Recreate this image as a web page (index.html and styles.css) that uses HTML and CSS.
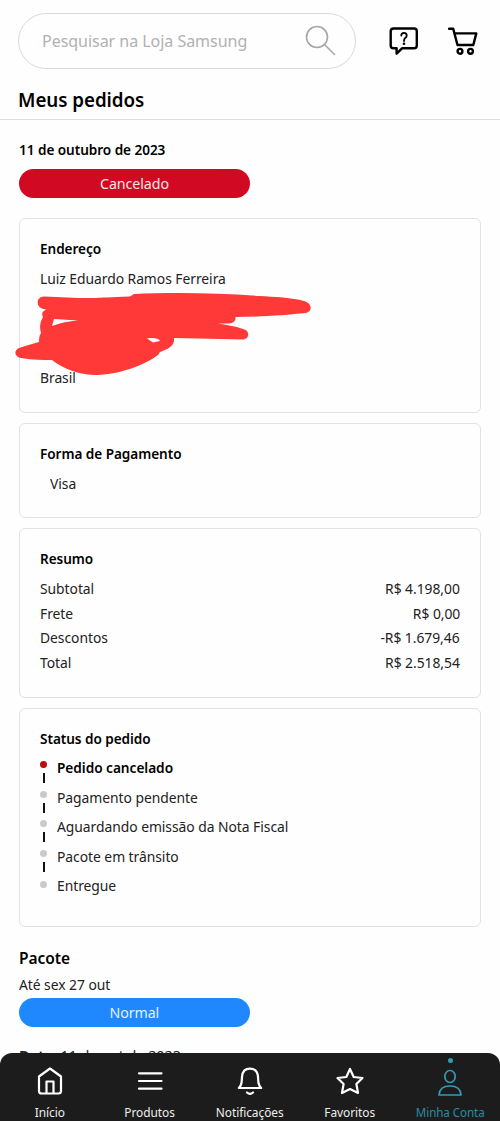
FILE: index.html
```html
<!DOCTYPE html>
<html lang="pt-BR">
<head>
<meta charset="utf-8">
<title>Meus pedidos</title>
<link rel="stylesheet" href="styles.css">
</head>
<body>
<div class="app">
  <header class="topbar">
    <div class="search">
      <span class="search-text">Pesquisar na Loja Samsung</span>
      <svg class="search-icon" viewBox="0 0 32 32"><circle cx="12" cy="12" r="10.5"/><path d="M19.5 19.5 L29.5 29.5"/></svg>
    </div>
    <svg class="top-icon chat" viewBox="0 0 30 30"><path d="M4.500 2.500 H25 Q27.800 2.500 27.800 5.300 V19.500 Q27.800 22.300 25 22.300 H13 L7.600 27.600 V22.300 H4.500 Q1.700 22.300 1.700 19.500 V5.300 Q1.700 2.500 4.500 2.500 Z"/><path class="thin" d="M12.300 9.500 Q12.300 6.800 15 6.800 Q17.700 6.800 17.700 9.400 Q17.700 11 16.200 12.100 Q15 13 15 15"/><circle class="dot" cx="15" cy="17.800" r="1.300"/></svg>
    <svg class="top-icon cart" viewBox="0 0 30 30"><path d="M1 2.800 H5.200 L9.500 19 H25.300 L28.300 7.400 H6.400"/><circle cx="12" cy="25.300" r="2.400"/><circle cx="22.500" cy="25.300" r="2.400"/></svg>
  </header>
  <h1 class="page-title"><span class="heading">Meus pedidos</span></h1>
  <main class="content">
    <h2 class="order-date"><span class="heading">11 de outubro de 2023</span></h2>
    <div class="badge red"><span class="text">Cancelado</span></div>

    <section class="card address">
      <h3 class="card-title"><span class="heading">Endereço</span></h3>
      <p class="line"><span class="text">Luiz Eduardo Ramos Ferreira</span></p>
      <p class="line hidden-lines"></p>
      <p class="line"><span class="text">Brasil</span></p>
      <svg class="scribble" viewBox="0 0 300 90">
        <path fill-rule="evenodd" d="M29 1.500 C21 1.500 21 12 27 13.500 L31 14.500 C26 17 27 20 28 22 C24 29 25 34 26 38 C24 41 24 44 24 47 C17 49 10 51 4 53 C-2 56 0 62 6 63 C18 65 28 65 37 65 C49 74 62 79 79 80 C104 80 130 70 143 60 C144 59 144 58 145 57 C153 54 160 51 159 43 L228 44.500 C235 44 235 35 228 34 C220 31 211 30 203 28.500 L214 28.500 C219 28 221 25 220.500 22 C244 22 271 20 291 18 C298 16 297 8 289 6 C277 2.500 260 2 244 1 C205 -2 159 -3 119 -1 L115 1.500 C95 2.500 85 2.500 81 3 C64 3.500 48 2 29 1.500 Z M39 24 L63 25.500 C54 26 45 28 37 31 Z M132 43.500 C139 42.500 144 43.500 145 46 L138 47.500 Z"/>
      </svg>
    </section>

    <section class="card payment">
      <h3 class="card-title"><span class="heading">Forma de Pagamento</span></h3>
      <p class="line visa"><span class="text">Visa</span></p>
    </section>

    <section class="card summary">
      <h3 class="card-title"><span class="heading">Resumo</span></h3>
      <div class="rows">
        <div class="row"><span class="text">Subtotal</span><span class="text amount">R$ 4.198,00</span></div>
        <div class="row"><span class="text">Frete</span><span class="text amount">R$ 0,00</span></div>
        <div class="row"><span class="text">Descontos</span><span class="text amount">-R$ 1.679,46</span></div>
        <div class="row"><span class="text">Total</span><span class="text amount">R$ 2.518,54</span></div>
      </div>
    </section>

    <section class="card status">
      <h3 class="card-title"><span class="heading">Status do pedido</span></h3>
      <ol class="steps">
        <li class="step current"><span class="track"></span><span class="text">Pedido cancelado</span></li>
        <li class="step"><span class="track"></span><span class="text">Pagamento pendente</span></li>
        <li class="step"><span class="track"></span><span class="text">Aguardando emissão da Nota Fiscal</span></li>
        <li class="step"><span class="track"></span><span class="text">Pacote em trânsito</span></li>
        <li class="step last"><span class="track"></span><span class="text">Entregue</span></li>
      </ol>
    </section>

    <h2 class="package-title"><span class="text">Pacote</span></h2>
    <p class="eta"><span class="text">Até sex 27 out</span></p>
    <div class="badge blue"><span class="text">Normal</span></div>
    <p class="package-date"><span class="text"><b>Data: </b>11 de out de 2023</span></p>
  </main>

  <nav class="bottom-nav">
    <a class="tab"><svg viewBox="0 0 30 30"><path d="M4 10.500 L15 2.500 L26 10.500 V25 Q26 27.500 23.500 27.500 H6.500 Q4 27.500 4 25 Z M11.500 27 V15.500 H18.500 V27"/></svg><span>Início</span></a>
    <a class="tab"><svg viewBox="0 0 30 30"><path d="M4 7.300 H26.500 M4 15 H26.500 M4 22.700 H26.500"/></svg><span>Produtos</span></a>
    <a class="tab"><svg viewBox="0 0 30 30"><path d="M3.800 22 C7.500 19 6.500 15 7 11 Q7.500 2.700 15 2.700 Q22.500 2.700 23 11 C23.500 15 22.500 19 26.200 22 Z M12 26.500 Q15 29.300 18 26.500"/></svg><span>Notificações</span></a>
    <a class="tab"><svg viewBox="0 0 30 30"><path d="M15 3 L18.700 11 L27.500 12 L21.400 18 L23 27 L15 23 L7 27 L8.600 18 L2.500 12 L11.300 11 Z"/></svg><span>Favoritos</span></a>
    <a class="tab active"><svg viewBox="0 0 30 30"><ellipse cx="15" cy="10.500" rx="5.200" ry="6"/><path d="M4 29 Q4.500 20 15 20 Q25.500 20 26 29 Z"/></svg><span>Minha Conta</span></a>
  </nav>
</div>
</body>
</html>
```
FILE: styles.css
```css
* { box-sizing: border-box; margin: 0; padding: 0; }
body { background: #fefefe; font-family: "Noto Sans", sans-serif; font-size: 15px; letter-spacing: -0.05px; color: #222; }
.app { height: 1121px; overflow: hidden; position: relative; }
svg { fill: none; stroke: currentColor; stroke-linecap: round; stroke-linejoin: round; display: block; }

/* Slightly condensed lettering */
.text, .heading, .search-text, .tab span { display: inline-block; transform-origin: left center; }
.text { transform: scaleX(0.925); }
.heading { transform: scaleX(0.905); }
.amount { transform-origin: right center; }
.badge .text { transform: scaleX(0.945); transform-origin: center; }

.topbar { display: flex; align-items: flex-start; padding: 13px 0 0 18px; height: 79px; }
.search { width: 337.5px; height: 56px; border: 1px solid #d9d9d9; border-radius: 28px; display: flex; align-items: center; justify-content: space-between; padding: 0 18px 1px 23px; }
.search-text { font-size: 17px; color: #b2b0b1; transform: scaleX(0.943); }
.search-icon { width: 32px; height: 32px; color: #a9a5a5; stroke-width: 1.6; }
.top-icon { width: 30px; height: 30px; margin-top: 13px; color: #000; stroke-width: 2.4; }
.chat { margin-left: 33.5px; }
.cart { margin-left: 28.5px; }
.thin { stroke-width: 1.8; }
.dot { fill: currentColor; stroke: none; }
.page-title { height: 41px; border-bottom: 1.5px solid #dcdcdc; padding-left: 18px; font-size: 20.5px; line-height: 40px; font-weight: 600; color: #000; }
.page-title .heading { transform: scaleX(0.915); }
.content { padding: 14px 19px 0; }
.order-date { font-size: 15px; line-height: 30px; font-weight: 600; color: #000; }
.badge { width: 231px; height: 29px; margin-top: 5px; border-radius: 15px; color: #fbe5e9; text-align: center; line-height: 29px; }
.red { background: #d10923; margin-bottom: 20px; }
.blue { background: #1f88ff; color: #e5f2ff; margin-top: 0; }
.card { position: relative; border: 1.500px solid #e2e2e2; border-radius: 6px; margin-bottom: 10px; padding: 14px 20px 0; width: 462px; }
.address { height: 194.5px; }
.payment { height: 95.5px; }
.summary { height: 170px; }
.status { height: 218.5px; }
.card-title { font-size: 15px; line-height: 30px; font-weight: 600; color: #000; }
.line { line-height: 30px; }
.hidden-lines { height: 69px; }
.visa { padding-left: 10px; }
.rows { padding-top: 3px; }
.row { display: flex; justify-content: space-between; line-height: 24.7px; }
.scribble { position: absolute; left: -5px; top: 76px; width: 300px; height: 90px; overflow: visible; fill: #ff3838; stroke: none; }
.steps { list-style: none; }
.step { display: flex; line-height: 29.6px; height: 29.6px; }
.current { font-weight: 600; color: #000; }
.current .text { transform: scaleX(0.912); }
.track { width: 17px; flex: none; display: flex; flex-direction: column; padding-top: 8px; }
.track::before { content: ""; width: 7px; height: 7px; flex: none; border-radius: 50%; background: #c9cacc; }
.track::after { content: ""; width: 1.500px; height: 10px; flex: none; margin: 5px 0 0 3px; background: #111; }
.current .track::before { background: #b41010; }
.last .track { padding-top: 10px; }
.last .track::after { display: none; }
.package-title { font-size: 16.5px; font-weight: 600; color: #000; line-height: 28px; margin-top: 17px; }
.package-title .text { transform: scaleX(0.94); }
.eta { line-height: 24px; padding-bottom: 2.5px; }
.package-date { line-height: 20px; margin-top: 18px; }
.package-date .text { transform: scaleX(0.96); }
.bottom-nav { position: absolute; left: 0; right: 0; bottom: 0; height: 68px; background: #1c1c1c; border-radius: 12px 12px 0 0; display: grid; grid-template-columns: repeat(5, 1fr); color: #fff; }
.tab { display: flex; flex-direction: column; align-items: center; padding-top: 13px; font-size: 12.5px; position: relative; }
.tab svg { width: 30px; height: 30px; stroke-width: 2.2; }
.tab span { line-height: 16px; margin-top: 8.5px; white-space: nowrap; color: #eee; transform: scaleX(0.95); transform-origin: center; }
.active { color: #2e9cba; }
.active svg { stroke-width: 1.7; }
.tab.active span { color: #2c8ba5; transform: scaleX(0.925); }
.active::before { content: ""; position: absolute; top: 5px; width: 5px; height: 5px; border-radius: 50%; background: #2e9cba; }
```
